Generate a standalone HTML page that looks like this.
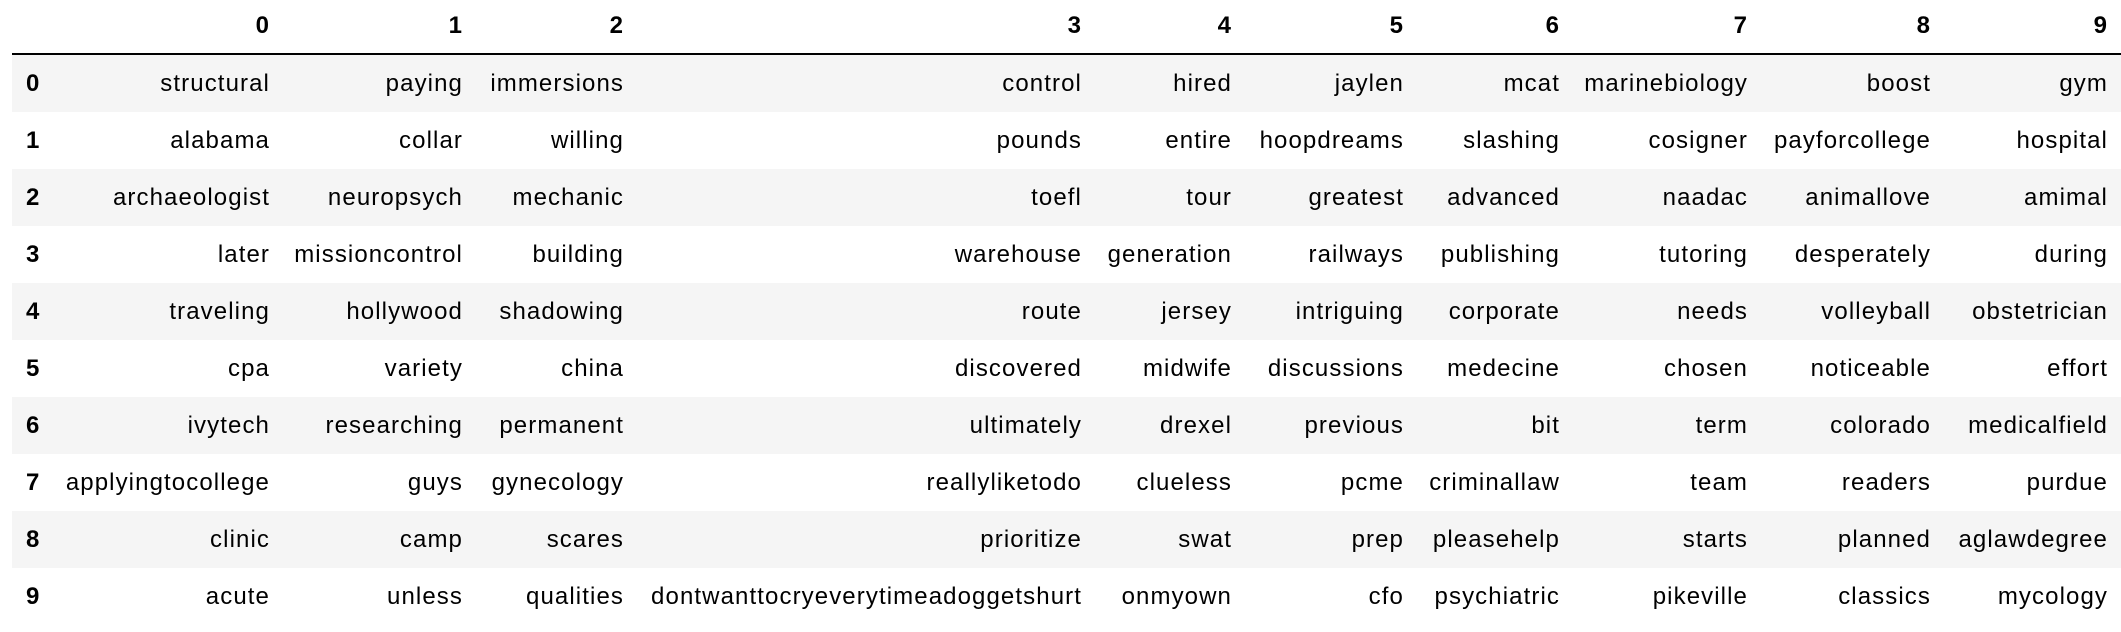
<!DOCTYPE html>
<html><head><meta charset="utf-8"><style>
html,body{margin:0;padding:0;background:#fff;width:2121px;height:632px;overflow:hidden}
body{position:relative;font-family:"Liberation Sans",Arial,sans-serif;font-size:24px;color:#000;letter-spacing:1.1px}
.row{position:absolute;left:12px;width:2109px;height:57px}
.s{background:#f5f5f5}
.c{position:absolute;white-space:nowrap;text-align:right;line-height:57px}
.h{font-weight:bold;letter-spacing:0}
.line{position:absolute;left:12px;width:2109px;top:53px;height:2px;background:#000}
.i{position:absolute;left:26px;font-weight:bold;line-height:57px;letter-spacing:0}
</style></head><body>
<div class="line"></div>
<div id="t"></div>
<script>
(function(){
var R=[269,462,623,1081,1231,1403,1559,1747,1930,2107];
var D=[
["structural","paying","immersions","control","hired","jaylen","mcat","marinebiology","boost","gym"],
["alabama","collar","willing","pounds","entire","hoopdreams","slashing","cosigner","payforcollege","hospital"],
["archaeologist","neuropsych","mechanic","toefl","tour","greatest","advanced","naadac","animallove","amimal"],
["later","missioncontrol","building","warehouse","generation","railways","publishing","tutoring","desperately","during"],
["traveling","hollywood","shadowing","route","jersey","intriguing","corporate","needs","volleyball","obstetrician"],
["cpa","variety","china","discovered","midwife","discussions","medecine","chosen","noticeable","effort"],
["ivytech","researching","permanent","ultimately","drexel","previous","bit","term","colorado","medicalfield"],
["applyingtocollege","guys","gynecology","reallyliketodo","clueless","pcme","criminallaw","team","readers","purdue"],
["clinic","camp","scares","prioritize","swat","prep","pleasehelp","starts","planned","aglawdegree"],
["acute","unless","qualities","dontwanttocryeverytimeadoggetshurt","onmyown","cfo","psychiatric","pikeville","classics","mycology"]];
var h='';
for(var j=0;j<10;j++)h+='<div class="c h" style="top:-3px;right:'+(2121-R[j])+'px">'+j+'</div>';
for(var r=0;r<10;r++){var y=55+r*57;
h+='<div class="row'+(r%2==0?' s':'')+'" style="top:'+y+'px"></div>';
h+='<div class="i" style="top:'+y+'px">'+r+'</div>';
for(var k=0;k<10;k++)h+='<div class="c" style="top:'+y+'px;right:'+(2121-R[k]-1)+'px">'+D[r][k]+'</div>';}
document.getElementById('t').innerHTML=h;
})();
</script>
</body></html>
